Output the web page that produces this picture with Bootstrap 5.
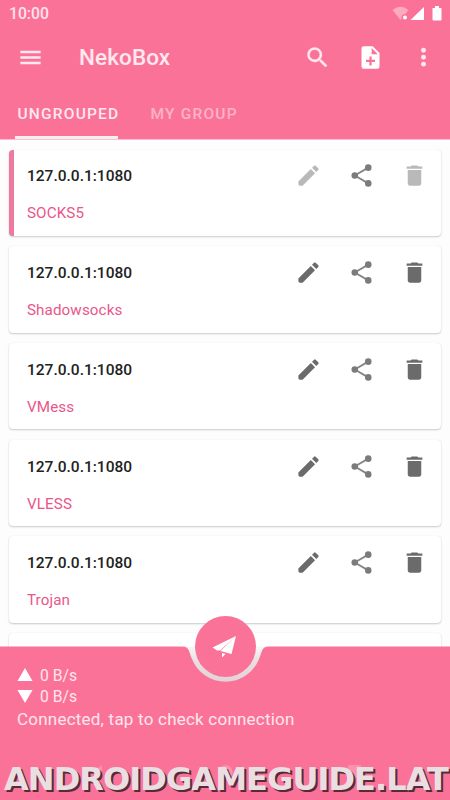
<!DOCTYPE html>
<html lang="en">
<head>
<meta charset="utf-8">
<meta name="viewport" content="width=device-width, initial-scale=1">
<title>NekoBox</title>
<link href="https://cdn.jsdelivr.net/npm/bootstrap@5.3.0/dist/css/bootstrap.min.css" rel="stylesheet">
<style>
:root{--neko:#fb7299}
body{font-family:Roboto,"Liberation Sans",sans-serif;background:#fefdfd}
.screen{width:450px;height:800px}
svg{display:block;fill:currentColor;flex:none}
.app-top{background:var(--neko);height:140px;color:#ffe9ef;border-bottom:1px solid #fdbfd0}
.status{height:28px;padding:0 8px 0 9px}
.clock{font-size:15.7px;font-weight:500;line-height:28px;color:#ffe3eb}
.tools{height:59px;padding:0 13px 0 17px}
.app-title{font-size:22.5px;font-weight:500;margin-left:35px;letter-spacing:.1px;line-height:27px}
.tools-right{gap:26px}
.tabs-row{height:52px;padding-left:15px}
.tab{font-size:15.5px;font-weight:500;line-height:55px;letter-spacing:1.2px;height:52px;padding:0 2.5px;white-space:nowrap}
.tab.on{width:103px;border-bottom:3px solid #f6f0ef}
.tab.off{margin-left:30px;color:#fdb3c8}
.profiles{padding:9.6px 9px 0;gap:10.2px;height:507px}
.profile{height:86.5px;flex:none;background:#fff;border-radius:4px;box-shadow:0 1px 2px rgba(0,0,0,.2),0 0 1px rgba(0,0,0,.1);padding:12.9px 13px 0 18px}
.profile.on{border-left:5px solid #ee7a9f;padding-left:13px}
.addr{font-size:15.5px;font-weight:500;line-height:28px;color:#222}
.kind{font-size:15.2px;line-height:20px;margin-top:13px;color:#e9568a;letter-spacing:.1px}
.acts{gap:26px;color:#6b6b6b}
.dim{color:#b9b9b9}
.bottom-bar{height:154px;color:#ffe6ed}
.bar-shape{left:0;top:-37px;z-index:0}
.stats{padding:18px 17px 0;z-index:1}
.rate{font-size:15.7px;line-height:21px;gap:7px}
.rate svg{color:#fff;margin-top:-2px}
.conn{font-size:17px;line-height:24px;letter-spacing:.22px;white-space:nowrap}
.watermark{left:4px;bottom:3px;z-index:2;font:bold 32px/38px "DejaVu Sans",sans-serif;letter-spacing:-.92px;color:#e9dfe2;text-shadow:2px 2px 0 #562b38;white-space:nowrap}
</style>
<script src="https://cdn.jsdelivr.net/npm/bootstrap@5.3.0/dist/js/bootstrap.bundle.min.js"></script>
</head>
<body>
<svg width="0" height="0" class="position-absolute">
<symbol id="pen" viewBox="0 0 24 24"><path d="M3 17.250V19.600Q3 21 4.400 21H6.750L17.810 9.940l-3.750-3.750zM20.710 7.040a1 1 0 0 0 0-1.410l-2.340-2.340a1 1 0 0 0-1.410 0l-1.830 1.830 3.750 3.750z"/></symbol>
<symbol id="share" viewBox="0 0 24 24"><path d="M6 12L18 5M6 12l12 7" stroke="#858585" stroke-width="1.600"/><g fill="#7b7b7b"><circle cx="6" cy="12" r="2.900"/><circle cx="18" cy="5" r="2.900"/><circle cx="18" cy="19" r="2.900"/></g></symbol>
<symbol id="bin" viewBox="0 0 24 24"><path d="M6 19c0 1.100.9 2 2 2h8c1.100 0 2-.9 2-2V7H6zM19 4h-3.500l-1-1h-5l-1 1H5v2h14z"/></symbol>
</svg>
<main class="screen d-flex flex-column position-relative overflow-hidden">
<header class="app-top flex-shrink-0">
<div class="status d-flex justify-content-between align-items-center">
<span class="clock">10:00</span>
<svg width="50" height="16" viewBox="0 0 50 16"><path d="M.5 4Q8.500-2.500 16.500 4L8.500 14z" fill="#fda9c1"/><circle cx="13" cy="11.500" r="3.500" fill="#fb7299"/><circle cx="13" cy="11.500" r="2" fill="#fff"/><path d="M32 1v13H18.500zM40.500 2H43V0h4v2h2.500v11.500a1 1 0 0 1-1 1h-7a1 1 0 0 1-1-1z" fill="#fff"/></svg>
</div>
<nav class="tools d-flex align-items-center">
<svg width="27" height="27" viewBox="0 0 24 24"><path d="M3 18h18v-2.300H3zm0-4.850h18v-2.300H3zM3 6v2.300h18V6z"/></svg>
<h1 class="app-title mb-0">NekoBox</h1>
<div class="tools-right d-flex ms-auto">
<svg width="27" height="27" viewBox="0 0 24 24"><path stroke="currentColor" stroke-width=".3" d="M15.500 14h-.79l-.28-.27A6.470 6.470 0 0 0 16 9.500 6.500 6.500 0 1 0 9.500 16c1.610 0 3.090-.59 4.230-1.570l.27.28v.79l5 4.990L20.490 19zm-6 0a4.500 4.500 0 1 1 0-9 4.500 4.500 0 0 1 0 9z"/></svg>
<svg class="text-white" width="27" height="27" viewBox="0 0 24 24"><path fill-rule="evenodd" d="M14 2H6a2 2 0 0 0-2 2v16a2 2 0 0 0 2 2h12a2 2 0 0 0 2-2V8zm2 14h-3v3h-2v-3H8v-2h3v-3h2v3h3zm-3-7V3.500L18.500 9z"/></svg>
<svg width="27" height="27" viewBox="0 0 24 24"><circle cx="12" cy="5.500" r="2.200"/><circle cx="12" cy="11.700" r="2.200"/><circle cx="12" cy="17.900" r="2.200"/></svg>
</div>
</nav>
<div class="tabs-row d-flex"><div class="tab on">UNGROUPED</div><div class="tab off">MY GROUP</div></div>
</header>
<section class="profiles d-flex flex-column overflow-hidden flex-shrink-0">
<article class="profile on"><div class="d-flex justify-content-between"><span class="addr">127.0.0.1:1080</span><div class="acts d-flex"><svg class="dim" width="27" height="27"><use href="#pen"/></svg><svg width="27" height="27"><use href="#share"/></svg><svg class="dim" width="27" height="27"><use href="#bin"/></svg></div></div><div class="kind">SOCKS5</div></article>
<article class="profile"><div class="d-flex justify-content-between"><span class="addr">127.0.0.1:1080</span><div class="acts d-flex"><svg width="27" height="27"><use href="#pen"/></svg><svg width="27" height="27"><use href="#share"/></svg><svg width="27" height="27"><use href="#bin"/></svg></div></div><div class="kind">Shadowsocks</div></article>
<article class="profile"><div class="d-flex justify-content-between"><span class="addr">127.0.0.1:1080</span><div class="acts d-flex"><svg width="27" height="27"><use href="#pen"/></svg><svg width="27" height="27"><use href="#share"/></svg><svg width="27" height="27"><use href="#bin"/></svg></div></div><div class="kind">VMess</div></article>
<article class="profile"><div class="d-flex justify-content-between"><span class="addr">127.0.0.1:1080</span><div class="acts d-flex"><svg width="27" height="27"><use href="#pen"/></svg><svg width="27" height="27"><use href="#share"/></svg><svg width="27" height="27"><use href="#bin"/></svg></div></div><div class="kind">VLESS</div></article>
<article class="profile"><div class="d-flex justify-content-between"><span class="addr">127.0.0.1:1080</span><div class="acts d-flex"><svg width="27" height="27"><use href="#pen"/></svg><svg width="27" height="27"><use href="#share"/></svg><svg width="27" height="27"><use href="#bin"/></svg></div></div><div class="kind">Trojan</div></article>
<article class="profile"></article>
</section>
<footer class="bottom-bar position-relative flex-shrink-0">
<svg class="bar-shape position-absolute" width="450" height="191" viewBox="0 0 450 191">
<defs><linearGradient id="ring" x1="0" y1="0" x2="0" y2="1"><stop offset="0" stop-color="#faf6f7"/><stop offset=".35" stop-color="#eadfe2"/><stop offset="1" stop-color="#dfcfd4"/></linearGradient></defs>
<path d="M183 36.500H268L262 46A37 37 0 0 1 189 46z" fill="url(#ring)"/>
<path d="M0 36.500H182C190 36.500 189 43 192 49A36 36 0 0 0 259 49C262 43 261 36.500 269 36.500H450V191H0z" fill="#fb7299"/>
<circle cx="225.500" cy="36.500" r="30.500" fill="#fb7299"/>
<path d="M236 26L212.500 37.500 217 40.500 220 40.500zM236 26L220.500 41 231.500 44zM222 43L225.500 44 222 47.500z" fill="#fff"/>
<g fill="#fc91af"><path d="M102 155v14l-9-7z"/><circle cx="225.500" cy="162" r="7"/><rect x="348" y="155" width="13" height="13" rx="1"/></g>
</svg>
<div class="stats position-relative">
<div class="rate d-flex align-items-center"><svg width="16" height="14" viewBox="0 0 16 14"><path d="M8 0l7.500 13H.5z"/></svg><span>0 B/s</span></div>
<div class="rate d-flex align-items-center"><svg width="16" height="14" viewBox="0 0 16 14"><path d="M8 14L.5 1h15z"/></svg><span>0 B/s</span></div>
<div class="conn">Connected, tap to check connection</div>
</div>
<div class="watermark position-absolute">ANDROIDGAMEGUIDE.LAT</div>
</footer>
</main>
</body>
</html>
